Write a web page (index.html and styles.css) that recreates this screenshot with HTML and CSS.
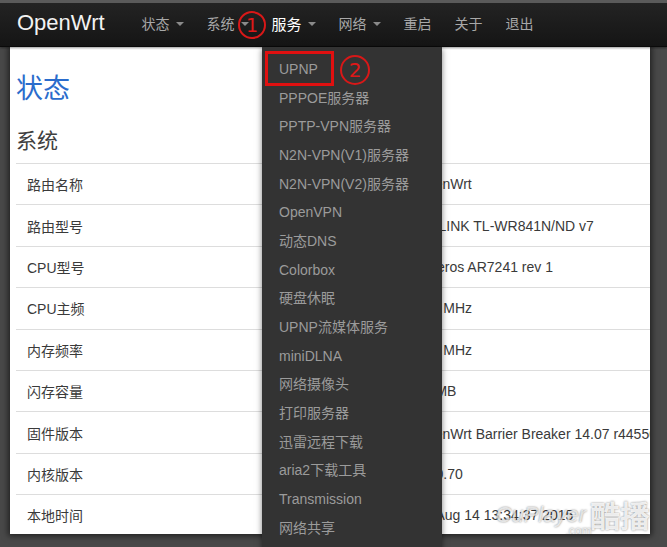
FILE: index.html
```html
<!doctype html>
<html lang="zh-CN">
  <head>
    <meta charset="utf-8" />
    <meta name="viewport" content="width=device-width, initial-scale=1" />
    <title>OpenWrt - 状态</title>
    <link rel="stylesheet" href="styles.css">
  </head>
  <body>
    <header class="navbar">
      <a class="brand" href="#">OpenWrt</a>
      <ul class="nav">
        <li><a href="#">状态<b class="caret"></b></a></li>
        <li><a href="#">系统<b class="caret"></b></a></li>
        <li class="open">
          <a href="#">服务<b class="caret"></b></a>
          <ul class="dropdown">
            <li class="picked"><a href="#">UPNP</a><span class="mark mark-2">2</span></li>
            <li><a href="#">PPPOE服务器</a></li>
            <li><a href="#">PPTP-VPN服务器</a></li>
            <li><a href="#">N2N-VPN(V1)服务器</a></li>
            <li><a href="#">N2N-VPN(V2)服务器</a></li>
            <li><a href="#">OpenVPN</a></li>
            <li><a href="#">动态DNS</a></li>
            <li><a href="#">Colorbox</a></li>
            <li><a href="#">硬盘休眠</a></li>
            <li><a href="#">UPNP流媒体服务</a></li>
            <li><a href="#">miniDLNA</a></li>
            <li><a href="#">网络摄像头</a></li>
            <li><a href="#">打印服务器</a></li>
            <li><a href="#">迅雷远程下载</a></li>
            <li><a href="#">aria2下载工具</a></li>
            <li><a href="#">Transmission</a></li>
            <li><a href="#">网络共享</a></li>
          </ul>
        </li>
        <li><a href="#">网络<b class="caret"></b></a></li>
        <li><a href="#">重启</a></li>
        <li><a href="#">关于</a></li>
        <li><a href="#">退出</a></li>
      </ul>
      <span class="mark mark-1">1</span>
    </header>

    <main class="page">
      <h2>状态</h2>
      <h3>系统</h3>
      <div class="table">
        <div class="row"><span>路由名称</span><span>OpenWrt</span></div>
        <div class="row"><span>路由型号</span><span>TP-LINK TL-WR841N/ND v7</span></div>
        <div class="row"><span>CPU型号</span><span>Atheros AR7241 rev 1</span></div>
        <div class="row"><span>CPU主频</span><span>400 MHz</span></div>
        <div class="row"><span>内存频率</span><span>400 MHz</span></div>
        <div class="row"><span>闪存容量</span><span>16 MB</span></div>
        <div class="row"><span>固件版本</span><span>OpenWrt Barrier Breaker 14.07 r44550 无</span></div>
        <div class="row"><span>内核版本</span><span>3.10.70</span></div>
        <div class="row"><span>本地时间</span><span>Fri Aug 14 13:34:37 2015</span></div>
      </div>
      <div class="watermark"><span class="wm-en">CuPlayer</span><span class="wm-cn">酷播</span><span class="wm-com">.com</span></div>
    </main>
  </body>
</html>
```

FILE: styles.css
```css
body {
  margin: 0;
  height: 547px;
  overflow: hidden;
  background: #494949;
  border-top: 3px solid #5a5a5a;
  font-family: "Liberation Sans", "Noto Sans CJK SC", sans-serif;
  font-size: 14px;
  color: #404040;
}
ul {
  list-style: none;
  margin: 0;
  padding: 0;
}
a {
  text-decoration: none;
  color: inherit;
}

.navbar {
  position: relative;
  z-index: 2;
  display: flex;
  height: 43px;
  background: linear-gradient(#232323, #151515);
  border-bottom: 1px solid #0a0a0a;
  box-shadow: 0 1px 2px rgba(0, 0, 0, 0.4);
}
.brand {
  width: 113px;
  padding-left: 17px;
  line-height: 40px;
  font-size: 22px;
  color: #f2f2f2;
}
.nav {
  display: flex;
}
.nav > li {
  position: relative;
}
.nav > li > a {
  display: flex;
  align-items: center;
  height: 40px;
  padding: 0 11.5px 3px;
  color: #a8a8a8;
}
.nav > li.open > a {
  color: #fff;
  font-size: 15px;
}
.caret {
  width: 0;
  height: 0;
  margin-left: 6px;
  margin-top: 2px;
  border-top: 4px solid #8a8a8a;
  border-left: 4px solid transparent;
  border-right: 4px solid transparent;
}

.dropdown {
  position: absolute;
  top: 44px;
  left: 2px;
  width: 180px;
  height: 520px;
  padding-top: 8px;
  background: #333333;
  box-shadow: 0 2px 6px rgba(0, 0, 0, 0.5);
}
.dropdown li {
  position: relative;
  line-height: 28.67px;
  padding-left: 17px;
  color: #9b9b9b;
  white-space: nowrap;
}
.picked::before {
  content: "";
  position: absolute;
  left: 3px;
  top: -4px;
  width: 63px;
  height: 29px;
  border: 3px solid #e01010;
}

.mark {
  position: absolute;
  display: flex;
  align-items: center;
  justify-content: center;
  box-sizing: border-box;
  border: 2px solid #d81818;
  border-radius: 50%;
  color: #e01818;
  font-family: "DejaVu Sans", sans-serif;
  font-size: 19px;
  line-height: 1;
}
.mark-1 {
  left: 238px;
  top: 8px;
  width: 28px;
  height: 28px;
}
.mark-2 {
  left: 78px;
  top: 0;
  width: 30px;
  height: 30px;
  font-size: 20px;
}

.page {
  position: relative;
  margin-left: 10px;
  width: 640px;
  height: 487px;
  padding-left: 6px;
  box-sizing: border-box;
  background: #fff;
  overflow: hidden;
  box-shadow: 0 0 6px 2px rgba(0, 0, 0, 0.55);
}
h2 {
  margin: 27px 0 0;
  font-size: 27px;
  line-height: 30px;
  font-weight: normal;
  color: #2a6ccc;
}
h3 {
  margin: 25px 0 10px;
  font-size: 21px;
  line-height: 24px;
  font-weight: normal;
  color: #404040;
}
.table {
  width: 700px;
}
.row {
  display: grid;
  grid-template-columns: 400px 1fr;
  align-items: center;
  height: 41.4px;
  box-sizing: border-box;
  border-top: 1px solid #dddddd;
  color: #3a3a3a;
  white-space: nowrap;
}
.row span:first-child {
  padding-left: 11px;
}

.watermark {
  position: absolute;
  right: 0;
  bottom: -2px;
  display: flex;
  align-items: flex-end;
  color: rgba(255, 255, 255, 0.85);
  text-shadow: 0 0 2px rgba(0, 0, 0, 0.5);
}
.wm-en {
  font-style: italic;
  font-size: 22px;
  margin-bottom: 8px;
  color: rgba(255, 255, 255, 0.7);
}
.wm-cn {
  font-size: 30px;
  font-weight: bold;
  margin-left: 4px;
}
.wm-com {
  position: absolute;
  left: 70px;
  bottom: -2px;
  font-size: 12px;
  color: rgba(255, 255, 255, 0.7);
}
```
